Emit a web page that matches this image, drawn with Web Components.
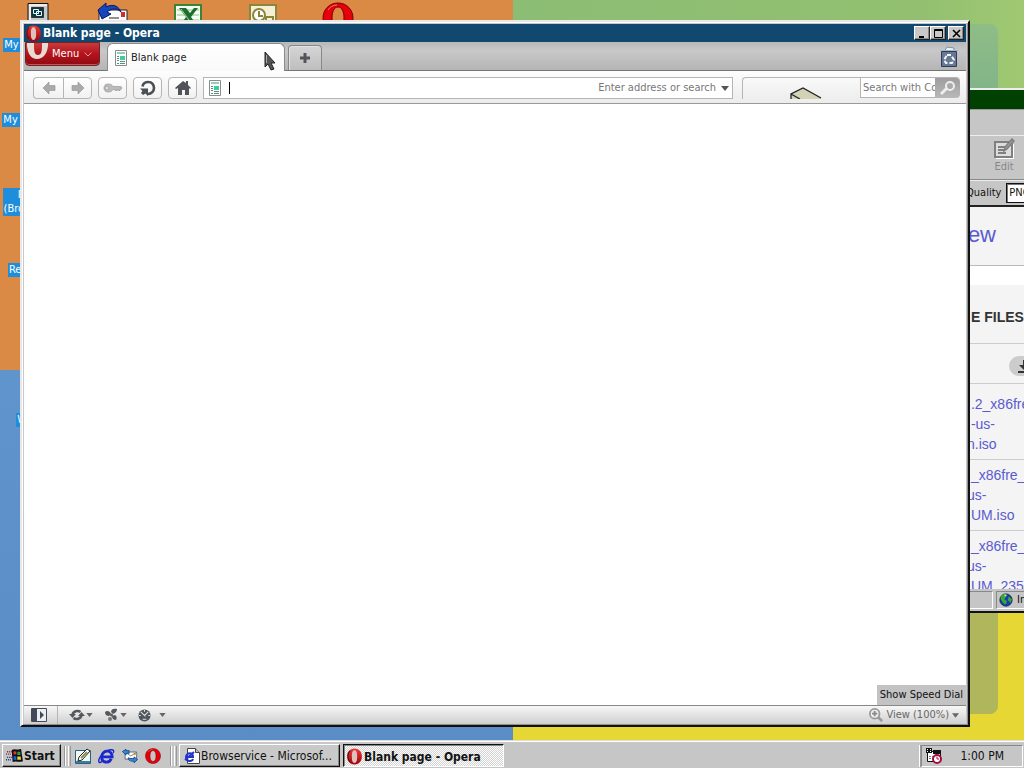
<!DOCTYPE html>
<html lang="en">
<head>
<meta charset="utf-8">
<title>Blank page - Opera</title>
<style>
html, body {
  height: 100%;
  margin: 0;
  overflow: hidden;
}
body {
  font: 11px/14px "DejaVu Sans Condensed", "DejaVu Sans", sans-serif;
  color: #111;
}
</style>
</head>
<body>
<desk-top></desk-top>
<script>
const reset = `
*, ::before, ::after { box-sizing: border-box; }
button, input, select { font: inherit; color: inherit; margin: 0; padding: 0; border: 0; border-radius: 0; background: none; outline: 0; }
a { color: inherit; text-decoration: none; }
`;

function component(name, html, ready) {
  customElements.define(name, class extends HTMLElement {
    constructor() {
      super();
      this.attachShadow({ mode: 'open' });
    }
    connectedCallback() {
      this.shadowRoot.innerHTML = `<style>${reset}</style>${html}`;
      if (ready) {
        ready.call(this, this.shadowRoot);
      }
    }
  });
}

const operaO = `<defs><linearGradient id="o" x2="0" y2="1"><stop stop-color="#ee3a35"/><stop offset="1" stop-color="#a00008"/></linearGradient></defs>
<path fill="url(#o)" fill-rule="evenodd" d="M16 1C7 1 2 8 2 16s5 15 14 15 14-7 14-15S25 1 16 1zm0 3c4 0 5 5 5 12s-1 12-5 12-5-5-5-12 1-12 5-12z"/>`;

const icons = {
  opera: ['0 0 32 32', `<ellipse cx="16" cy="16" rx="6" ry="13" fill="#dfc0bb"/>${operaO}<path d="M8 5c-5 4-6 15-1 21" fill="none" stroke="#4d1720" stroke-width="2"/>`],
  operaRed: ['0 0 32 32', `<path fill="#e6000b" stroke="#7c0000" fill-rule="evenodd" d="M16 1C7 1 1 8 1 16s6 15 15 15 15-7 15-15S25 1 16 1zm0 4c4 0 6 5 6 11s-2 11-6 11-6-5-6-11 2-11 6-11z"/><path d="M6 8c2-3 5-5 9-5" fill="none" stroke="#ff7770" stroke-width="1"/>`],
  operaWhite: ['0 0 21 20', `<path fill="#e8dbd2" fill-rule="evenodd" d="M0-8H21V3c-1 8-5 13-11 13S1 11 0 3zM7-6V3c0 6 1 9 4 9s4-3 4-9v-9z"/>`],
  computer: ['0 0 32 32', `<path fill="#c9c9c9" stroke="#111" d="M6 1.500h20v18H6z"/><path fill="#eee" d="M7 2h18v2H9v15H7z"/><path fill="#073943" stroke="#333" d="M9.500 5.500h12v10h-12z"/><path fill="none" stroke="#e9faff" d="M11.500 7.500h5v4h-5zM14.500 9.500h5v4h-5z"/><path fill="#ccc" stroke="#111" d="M2 21.500h28v8H2z"/>`],
  mail: ['0 0 32 32', `<path fill="#fff" stroke="#222" d="M2 8h28v20H2z"/><path fill="#d32c2c" d="M24 10h4v5h-4z"/><path stroke="#222" d="M12 16h10M12 20h8"/><path fill="#1746ba" stroke="#04166d" d="M1 8l8-7v4c8-4 13 0 15 5-4-4-9-4-14 0l4 2-9 5z"/>`],
  excel: ['0 0 32 32', `<path fill="#f5fff2" stroke="#3a8337" stroke-width="2" d="M3 3h26v26H3z"/><path stroke="#8fbd83" d="M5 8h22M5 13h22M5 18h22"/><path fill="#1c6e2e" d="M7 6h7l4 5 4-5h4l-7 9 8 11h-7l-5-7-5 7H6l8-11z"/><path stroke="#aed3a3" d="M9 7l13 18"/>`],
  outlook: ['0 0 32 32', `<path fill="#f3f0d5" stroke="#8b853d" stroke-width="2" d="M3 3h26v26H3z"/><circle cx="12" cy="13" r="6" fill="#fff" stroke="#8c8538" stroke-width="2"/><path d="M12 9v5h4M19 15h7v8h-3v-4h-4z" fill="none" stroke="#8c8538" stroke-width="2"/>`],
  page: ['0 0 12 16', `<path fill="#fff" stroke="#858d8b" d="M.5.5h11v15H.5z"/><path fill="#92ceb8" d="M2 2h8v2H2z"/><path fill="#45c99e" d="M5 6h5v4H5z"/><path stroke="#568d7c" d="M2 6.500h2M2 8.500h2M2 10.500h2M2 13.500h2M5 11.500h5M5 13.500h5"/>`],
  back: ['0 0 16 14', `<path fill="#aaa" stroke="#999" stroke-width=".7" d="M8 1v3.500h6v5H8V13L2 7z"/>`],
  forward: ['0 0 16 14', `<path fill="#aaa" stroke="#999" stroke-width=".7" d="M8 1v3.500H2v5h6V13l6-6z"/>`],
  key: ['0 0 20 12', `<path fill="#bbb" stroke="#999" stroke-width=".7" fill-rule="evenodd" d="M5 2c3 0 4 1 5 2.500h8L19 6l-1 1.500h-1v1h-2v-1h-1v1h-2v-1h-2C9 9 8 10 5 10S1 8 1 6s1-4 4-4zM4 4.500a1.500 1.500 0 100 3 1.500 1.500 0 000-3z"/>`],
  reload: ['0 0 16 16', `<path fill="none" stroke="#4b5055" stroke-width="2.600" d="M2.500 6.500C3 3 6 2 8.500 2 12 2 14 5 14 8s-2.500 6-6 6H7"/><path fill="#4b5055" d="M0 8.500h8V16l-2.500-2.500L3 15l-2-2 1.500-2z"/>`],
  home: ['0 0 16 16', `<path fill="#505459" d="M8 1L0 8l1 1 2-1v7h4v-5h3v5h4V8l1 1 1-1-3-3V1h-2v2z"/>`],
  plus: ['0 0 12 12', `<path fill="#52565c" d="M4.500 1h3v3.500H11v3H7.500V11h-3V7.500H1v-3h3.500z"/>`],
  trash: ['0 0 18 22', `<path fill="#e6f0f7" stroke="#7b91a5" d="M4 6l3-5 7 1v5z"/><path fill="#687792" stroke="#2d3b58" d="M1.500 5.500h15v15h-15z"/><path stroke="#a7b7cb" d="M0 4.500h18"/><path fill="none" stroke="#eef6ff" stroke-width="2" stroke-dasharray="4 2" d="M7 9h4l3 5-2 3H6l-2-3z"/>`],
  magnifier: ['0 0 16 16', `<path stroke="#eee" stroke-width="3" d="M1 14l6-6"/><circle cx="10" cy="6" r="4" fill="#aaa" stroke="#eee" stroke-width="2"/>`],
  zoom: ['0 0 16 16', `<path stroke="#999" stroke-width="3" d="M10 10l5 5"/><circle cx="6.500" cy="6.500" r="5.500" fill="#eee" stroke="#999" stroke-width="2"/><path stroke="#888" stroke-width="2" d="M3.500 6.500h6M6.500 3.500v6"/>`],
  down: ['0 0 8 5', `<path fill="currentColor" d="M0 0h8L4 5z"/>`],
  chevron: ['0 0 8 5', `<path fill="none" stroke="#e7a0a0" d="M.5.5L4 4 7.500.5"/>`],
  panel: ['0 0 16 14', `<path fill="#eceff2" stroke="#424a57" d="M.5.5h15v13H.5z"/><path fill="#424a57" d="M1 1h5v12H1zM9 3l4 4-4 4z"/>`],
  sync: ['0 0 16 12', `<path fill="none" stroke="#54585d" stroke-width="2.500" d="M3.500 6C4 2 9 1 11.500 3M12.500 6c-.5 4-5.500 5-8 3"/><path fill="#54585d" d="M0 5h7l-3.500 4zM9 7h7l-3.500-4z"/>`],
  unite: ['0 0 15 14', `<path fill="#54585d" d="M1 4c2-2 5-1 6 2L5 8C3 8 1 7 1 4zM7 4c0-3 3-4 6-3 0 3-2 4-4 5zM8 8l3-1c2 1 2 3 1 5-3 0-4-2-4-4z"/><circle cx="6" cy="11" r="2" fill="#777"/><circle cx="7.500" cy="7" r="1.500" fill="#54585d"/>`],
  turbo: ['0 0 14 14', `<circle cx="7" cy="7" r="6.500" fill="#4f545b"/><path stroke="#dce0e3" stroke-width="1.200" d="M7 1v2M1 7h2M11 7h2M3 3l5 5M11 3l-4 4M5 11h4"/>`],
  min: ['0 0 9 9', `<path fill="#000" d="M1 7h5v2H1z"/>`],
  max: ['0 0 9 9', `<path fill="none" stroke="#000" d="M.5.5h8v8h-8zM0 1.500h9"/>`],
  close: ['0 0 9 9', `<path stroke="#000" stroke-width="1.600" d="M1 1l7 7M8 1L1 8"/>`],
  windows: ['0 0 18 16', `<path fill="#111" d="M6 2c4-2 6 1 9-1h1l2 13c-5 2-7-1-11 1z"/><path fill="#e23a2f" d="M8 4c1-1 2 0 3 0v3c-1 0-2-1-3 0z"/><path fill="#28a047" d="M12 4h3l.5 3.500H12z"/><path fill="#215ed3" d="M8 9c1-1 2 0 3 0v4c-1 0-2-1-3 0z"/><path fill="#efd32b" d="M12 9h3.500l.5 3.500h-4z"/><path stroke="#8d1d28" stroke-width="1.500" stroke-dasharray="1 1" d="M1 4h5M0 6.500h6"/><path stroke="#1a2c8c" stroke-width="1.500" stroke-dasharray="1 1" d="M1 10h5M0 12.500h6"/>`],
  desktop: ['0 0 16 16', `<path fill="#f1f9ee" stroke="#27618a" d="M.5 2.500h15v13H.5z"/><path fill="#3c7e9f" d="M1 13h14v2H1z"/><path fill="#fff" stroke="#222" d="M4 9l8-8 3 2-8 9-4 1z"/><path stroke="#8a8f55" stroke-width="2" d="M6 10l6-6"/>`],
  ie: ['0 0 18 16', `<path fill="none" stroke="#1a28d0" stroke-width="3" d="M4 9h11c0-8-10-8-11-1-1 8 8 8 10 3"/><path fill="none" stroke="#1a28d0" stroke-width="1.500" d="M4 14C0 17-1 12 5 6s14-6 11-1"/>`],
  iePage: ['0 0 16 16', `<path fill="#fff" stroke="#444" d="M3.500.5h8l4 4v11h-12z"/><path fill="#bbb" stroke="#444" d="M11.500.5v4h4"/><path fill="none" stroke="#2034c8" stroke-width="2" d="M2 9h7c0-5-6-5-7 0 0 5 6 5 7 2M1 12l9-8"/>`],
  outlookEx: ['0 0 18 16', `<path fill="#fff" stroke="#41618f" d="M3.500 3.500h13v8h-13z"/><path fill="#e9b52e" d="M13 4h3v3h-3z"/><path fill="none" stroke="#777" d="M4 4l6 4 6-4"/><path fill="#2f8fd6" stroke="#15438b" d="M.5 3l4-2.500V2H8v3H4.500v2zM17.500 12l-4 3.500V14C9 14 7 13 7 10c2 1 4 1 6.500 1V9z"/>`],
  scheduler: ['0 0 16 16', `<path fill="#fff" stroke="#111" d="M1.500 3.500h13v10h-13z"/><path fill="#111" d="M7 2h8v4H7zM0 0h6v5H0z"/><path stroke="#fff" stroke-width="1" d="M1 1.500h1M4 1.500h1M1 3.500h1M4 3.500h1"/><path stroke="#777" stroke-dasharray="2 1" d="M3 8.500h7M3 10.500h4"/><circle cx="11" cy="11" r="4" fill="#fff" stroke="#a30d3d" stroke-width="2"/><path fill="none" stroke="#a30d3d" d="M11 8.500V11h2"/>`],
  globe: ['0 0 16 16', `<circle cx="8" cy="8" r="7" fill="#153bb7" stroke="#10214c"/><path fill="#38a832" d="M2 4c3-4 7-3 7-1L6 7l3 2-1 4C3 12 4 8 2 8zM11 4l4 3-2 4-3-3z"/><path fill="#e7f6e7" d="M6 2h3L7 4z"/>`],
  edit: ['0 0 22 22', `<path fill="none" stroke="#fff" d="M3 20.500h17.500V6"/><path fill="#ddd" stroke="#808080" stroke-width="2" d="M2 4h17v15H2z"/><path stroke="#808080" stroke-width="2" d="M5 9h7M5 12h6M5 15h8"/><path fill="#999" stroke="#808080" stroke-width="1.500" d="M11 13l1-4 7-8 2 2-7 8z"/>`],
  download: ['0 0 16 16', `<path fill="#333" d="M6 2h4v5h4l-6 6-6-6h4zM1 13h14v2H1z"/>`],
  book: ['0 0 32 12', `<path fill="#d3d2b7" d="M1 12V7l12-6 18 10v1z"/><path fill="none" stroke="#222" stroke-width="1.300" d="M1 12V7l12-6 18 10M1 7l9 5"/>`],
  cursor: ['0 0 12 20', `<path fill="#555" stroke="#222" d="M1 1v15l3-3 3 6 3-1-3-6h4z"/><path stroke="#aaa" d="M2.500 4v8"/>`]
};

customElements.define('app-icon', class extends HTMLElement {
  constructor() {
    super();
    this.attachShadow({ mode: 'open' });
  }
  connectedCallback() {
    const [box, body] = icons[this.getAttribute('name')];
    const [, , w, h] = box.split(' ');
    const width = this.getAttribute('w') || w;
    const height = this.getAttribute('h') || h;
    this.shadowRoot.innerHTML = `<style>:host { display: block; flex: none; } svg { display: block; }</style>
      <svg width="${width}" height="${height}" viewBox="${box}" aria-hidden="true">${body}</svg>`;
  }
});

component('desk-icon', `
<style>
:host { display: flex; flex-direction: column; align-items: center; height: 75px; padding-top: 2px; gap: 4px; color: #fff; }
.pic { height: 32px; flex: none; }
span { background: #1e8ddb; padding: 0 1px; text-align: center; white-space: nowrap; }
</style>
<div class="pic"></div>
<span><slot></slot></span>
`, function(root) {
  const name = this.getAttribute('icon');
  if (name) {
    root.querySelector('.pic').innerHTML = `<app-icon name="${name}"></app-icon>`;
  }
  if (!this.textContent) {
    root.querySelector('span').remove();
  }
});

component('title-bar', `
<style>
:host { display: flex; align-items: center; height: 18px; padding: 0 2px 0 1px; background: #11486f; color: #fff; font: bold 12px/18px "DejaVu Sans Condensed", sans-serif; }
span { flex: 1; padding-left: 1px; }
.group { display: flex; }
.group + button { margin-left: 2px; }
button { display: flex; justify-content: center; align-items: center; width: 16px; height: 14px; background: #c9c9c9; border: 1px solid; border-color: #fff #222 #222 #fff; box-shadow: inset -1px -1px #888; }
</style>
<app-icon name="opera" w="17" h="17"></app-icon>
<span><slot></slot></span>
<div class="group">
  <button aria-label="Minimize"><app-icon name="min"></app-icon></button>
  <button aria-label="Maximize"><app-icon name="max"></app-icon></button>
</div>
<button aria-label="Close"><app-icon name="close"></app-icon></button>
`);

component('tab-bar', `
<style>
:host { display: flex; height: 29px; padding: 0 8px 0 1px; background: linear-gradient(#b8b8b8, #c8c8c8 30%, #b5b5b5); border-bottom: 1px solid #747474; color: #222; }
.menu { display: flex; align-items: center; width: 75px; height: 24px; padding: 0 7px 0 1px; gap: 4px; color: #fff; background: linear-gradient(#c83a3e, #b5121b 50%, #8f0b12); border: 1px solid #6c2428; border-radius: 0 0 4px 4px; box-shadow: inset 0 -1px #d25054; }
.menu app-icon:first-child { align-self: flex-start; }
.menu span { flex: 1; text-align: left; }
.tab { display: flex; align-items: center; gap: 4px; width: 178px; height: 28px; margin: 1px 0 0 7px; padding: 0 7px; background: linear-gradient(#fff, #fafafa); border: 1px solid #8b8b8b; border-bottom: 0; border-radius: 6px 6px 0 0; }
.new { display: flex; align-items: center; justify-content: center; width: 34px; height: 25px; margin: 3px 0 0 3px; border: 1px solid #888; border-bottom: 0; border-radius: 4px 4px 0 0; background: linear-gradient(#d5d5d5, #bebebe); box-shadow: inset 1px 1px #e2e2e2; }
.trash { margin: 4px 0 0 auto; height: 22px; }
</style>
<button class="menu"><app-icon name="operaWhite"></app-icon><span>Menu</span><app-icon name="chevron"></app-icon></button>
<button class="tab"><app-icon name="page"></app-icon>Blank page</button>
<button class="new" aria-label="New tab"><app-icon name="plus"></app-icon></button>
<button class="trash" aria-label="Closed tabs"><app-icon name="trash"></app-icon></button>
`);

component('tool-button', `
<style>
:host { display: flex; flex: none; width: 29px; }
:host([side=left]) { width: 30px; }
button { display: flex; flex: 1; align-items: center; justify-content: center; border: 1px solid #b5b5b5; border-radius: 4px; background: linear-gradient(#fff, #f1f1f1); }
:host([side=left]) button { border-radius: 4px 0 0 4px; border-right: 0; }
:host([side=right]) button { border-radius: 0 4px 4px 0; }
</style>
<button></button>
`, function(root) {
  const button = root.querySelector('button');
  button.setAttribute('aria-label', this.getAttribute('label'));
  button.innerHTML = `<app-icon name="${this.getAttribute('icon')}"></app-icon>`;
});

component('nav-bar', `
<style>
:host { display: flex; height: 33px; padding: 6px 6px 4px 9px; gap: 6px; background: linear-gradient(#fdfdfd, #ececec); border-bottom: 1px solid #999; }
.pair { display: flex; }
.address { flex: 1; display: flex; align-items: center; height: 22px; padding: 0 3px 0 5px; background: #fff; border: 1px solid #b5b5b5; color: #777; }
.address input { flex: 1; min-width: 0; text-align: right; padding-right: 5px; }
.caret { width: 1px; height: 12px; margin-left: 8px; background: #000; }
.address app-icon { color: #555; }
::placeholder { color: #777; opacity: 1; }
.personal { display: flex; width: 218px; height: 22px; margin-left: 3px; border: 1px solid #b5b5b5; border-width: 1px 0 0 1px; border-radius: 4px 4px 0 0; }
.slot { flex: 1; display: flex; align-items: flex-end; justify-content: center; padding-left: 8px; }
.search { width: 75px; height: 20px; padding-left: 2px; background: #fff; border: 1px solid #b5b5b5; border-width: 0 0 1px 1px; color: #777; }
.go { display: flex; align-items: center; justify-content: center; width: 25px; height: 20px; border-radius: 0 4px 4px 0; background: linear-gradient(#9d9d9d, #b9b9b9); }
</style>
<div class="pair">
  <tool-button side="left" icon="back" label="Back"></tool-button>
  <tool-button side="right" icon="forward" label="Forward"></tool-button>
</div>
<tool-button icon="key" label="Wand"></tool-button>
<tool-button icon="reload" label="Reload"></tool-button>
<tool-button icon="home" label="Home"></tool-button>
<div class="address">
  <app-icon name="page"></app-icon>
  <span class="caret"></span>
  <input aria-label="Address" placeholder="Enter address or search">
  <app-icon name="down"></app-icon>
</div>
<div class="personal">
  <div class="slot"><app-icon name="book"></app-icon></div>
  <input class="search" aria-label="Search" placeholder="Search with Complete">
  <button class="go" aria-label="Go"><app-icon name="magnifier"></app-icon></button>
</div>
`);

component('status-bar', `
<style>
:host { display: flex; align-items: center; height: 19px; padding: 0 7px; background: linear-gradient(#f7f7f7, #cfcfcf); border-top: 1px solid #888; color: #666; }
button { display: flex; align-items: center; gap: 1px; }
.extras { display: flex; align-items: center; gap: 11px; height: 18px; margin-left: 10px; padding-left: 11px; border-left: 1px solid #b5b5b5; }
.extras button:last-child { gap: 8px; }
.view { margin-left: auto; gap: 3px; }
</style>
<button aria-label="Panels"><app-icon name="panel"></app-icon></button>
<div class="extras">
  <button aria-label="Synchronize"><app-icon name="sync"></app-icon><app-icon name="down" w="7" h="4"></app-icon></button>
  <button aria-label="Unite"><app-icon name="unite"></app-icon><app-icon name="down" w="7" h="4"></app-icon></button>
  <button aria-label="Turbo"><app-icon name="turbo" w="13" h="13"></app-icon><app-icon name="down" w="7" h="4"></app-icon></button>
</div>
<button class="view"><app-icon name="zoom" w="14" h="14"></app-icon>View (100%)<app-icon name="down" w="7" h="5"></app-icon></button>
`);

component('opera-window', `
<style>
:host { display: flex; flex-direction: column; padding: 1px 1px 0; background: #c8c8c8; border: 2px solid; border-color: #e8e8e8 #111 #111 #e8e8e8; box-shadow: inset 1px 1px #fff, inset -1px -1px #909090; }
.frame { flex: 1; display: flex; flex-direction: column; padding: 1px; }
main { flex: 1; display: flex; align-items: flex-end; justify-content: flex-end; background: #fff; }
main button { height: 20px; padding: 0 3px; background: #c3c3c3; }
</style>
<div class="frame">
  <title-bar>Blank page - Opera</title-bar>
  <tab-bar></tab-bar>
  <nav-bar></nav-bar>
  <main><button>Show Speed Dial</button></main>
  <status-bar></status-bar>
</div>
`);

component('file-row', `
<style>
:host { display: block; padding: 5px 0 5px 5px; border-top: 1px solid #ccc; font: 14px/20px "Liberation Sans", sans-serif; color: #5a5bd0; white-space: nowrap; }
:host(.first) { padding-top: 10px; }
a { display: block; }
</style>
<a href="#"><slot></slot></a>
`);

component('browservice-window', `
<style>
:host { display: flex; flex-direction: column; overflow: hidden; background: #c6c6c6; border: 2px solid; border-color: #eee #222 #111 #eee; }
.title { height: 20px; flex: none; background: #004000; border-bottom: 1px solid #eee; }
.menus { height: 26px; flex: none; border-bottom: 1px solid #eee; box-shadow: 0 -1px #999; }
.tools { display: flex; height: 44px; flex: none; padding: 2px 0 0 17px; color: #888; border-bottom: 1px solid #888; text-shadow: 1px 1px #fff; }
.tools button { display: flex; flex-direction: column; align-items: center; width: 50px; }
.quality { display: flex; align-items: center; height: 27px; flex: none; gap: 5px; padding-left: 4px; border-top: 1px solid #eee; border-bottom: 2px solid #222; }
select { appearance: none; height: 20px; width: 60px; padding: 0 2px; background: #fff; border: 1px solid #111; box-shadow: inset 1px 1px #777; }
.page { flex: 1; min-height: 0; overflow: hidden; background: #f4f4f4; font-family: "Liberation Sans", sans-serif; }
.view { display: block; height: 59px; padding: 15px 0 0 1px; font-size: 22px; line-height: 26px; color: #5a5bd0; border-bottom: 1px solid #bbb; }
.gap { height: 19px; background: #fff; }
h2 { margin: 0; height: 58px; padding: 22px 0 0 9px; font-size: 14px; line-height: 20px; color: #333; white-space: nowrap; }
.download { display: flex; align-items: center; height: 40px; padding: 4px 0 0 47px; border-top: 1px solid #ccc; }
.download button { display: flex; align-items: center; width: 50px; height: 20px; padding-left: 8px; background: #ccc; border-radius: 10px; }
.foot { display: flex; height: 22px; flex: none; padding: 2px 0; gap: 3px; background: #c6c6c6; }
.foot div { display: flex; align-items: center; gap: 4px; border: 1px solid; border-color: #888 #fff #fff #888; padding-left: 2px; }
.foot div:first-child { width: 31px; }
.foot div:last-child { flex: 1; }
</style>
<div class="title"></div>
<div class="menus"></div>
<div class="tools"><button><app-icon name="edit"></app-icon>Edit</button></div>
<div class="quality"><label for="q">Quality</label><select id="q"><option>PNG</option></select></div>
<div class="page">
  <a class="view" href="#">iew</a>
  <div class="gap"></div>
  <h2>E FILES</h2>
  <div class="download"><button aria-label="Download"><app-icon name="download"></app-icon></button></div>
  <file-row class="first">&nbsp;.2_x86fre_<br>&nbsp;-us-<br>n.iso</file-row>
  <file-row>&nbsp;_x86fre_<br>us-<br>&nbsp;UM.iso</file-row>
  <file-row>&nbsp;_x86fre_<br>us-<br>&nbsp;UM_235</file-row>
</div>
<div class="foot"><div></div><div><app-icon name="globe" w="14" h="14"></app-icon>In</div></div>
`);

component('task-button', `
<style>
:host { display: flex; width: 161px; }
button { flex: 1; min-width: 0; display: flex; align-items: center; gap: 1px; height: 23px; padding: 0 4px; background: #c9c9c9; border: 1px solid; border-color: #fff #111 #111 #fff; box-shadow: inset -1px -1px #888; font-size: 12px; }
:host([active]) button { font-weight: bold; border-color: #111 #fff #fff #111; box-shadow: inset 1px 1px #888; background: repeating-conic-gradient(#fff 0 25%, #d2d2d2 0 50%) 0 0 / 2px 2px; padding: 2px 2px 0; }
span { white-space: nowrap; }
</style>
<button><slot name="icon"></slot><span><slot></slot></span></button>
`);

component('task-bar', `
<style>
:host { display: flex; align-items: center; height: 28px; padding: 2px 1px 0 2px; background: #c6c6c6; border-top: 1px solid #ddd; box-shadow: inset 0 1px #fff; }
.start { display: flex; align-items: center; gap: 1px; height: 23px; width: 59px; padding: 0 3px; font: bold 12px/16px "DejaVu Sans Condensed", sans-serif; border: 1px solid; border-color: #fff #111 #111 #fff; box-shadow: inset -1px -1px #888; }
.grip { display: flex; gap: 2px; margin: 0 4px 0 3px; }
.grip::before, .grip::after { content: ""; width: 2px; height: 20px; border-left: 1px solid #999; border-right: 1px solid #fff; }
.grip::after { width: 3px; border-left-color: #fff; border-right-color: #999; }
.quick { display: flex; align-items: center; gap: 7px; margin-right: 6px; }
.quick + .grip { margin-right: 2px; }
.tasks { display: flex; flex: 1; gap: 3px; }
.tray { display: flex; align-items: center; justify-content: space-between; width: 102px; height: 22px; padding: 0 18px 0 4px; border: 1px solid; border-color: #888 #fff #fff #888; font-size: 12px; }
.edge { width: 2px; height: 22px; background: #fff; border-right: 1px solid #999; }
</style>
<button class="start"><app-icon name="windows" w="17" h="15"></app-icon>Start</button>
<div class="grip"></div>
<div class="quick">
  <a href="#" aria-label="Show desktop"><app-icon name="desktop"></app-icon></a>
  <a href="#" aria-label="Internet Explorer"><app-icon name="ie" w="17"></app-icon></a>
  <a href="#" aria-label="Outlook Express"><app-icon name="outlookEx" w="16"></app-icon></a>
  <a href="#" aria-label="Opera"><app-icon name="operaRed" w="16" h="16"></app-icon></a>
</div>
<div class="grip"></div>
<div class="tasks">
  <task-button><app-icon slot="icon" name="iePage"></app-icon>Browservice - Microsof...</task-button>
  <task-button active><app-icon slot="icon" name="opera" w="17" h="17"></app-icon>Blank page - Opera</task-button>
</div>
<div class="edge"></div>
<div class="tray"><app-icon name="scheduler"></app-icon><time>1:00 PM</time></div>
`);

component('desk-top', `
<style>
:host { display: flex; flex-direction: column; height: 100%; overflow: hidden; }
.desk { position: relative; flex: 1; min-height: 0; overflow: hidden; display: grid; grid-template: 1fr 1fr / 513fr 511fr; }
.orange { background: #da8a45; }
.green { background: linear-gradient(90deg, #8cbd74, #92c070 80%, #a0c872); display: flex; padding: 24px 26px 0 0; }
.green i { flex: 1; background: linear-gradient(#8fbd86, #75ab8c 40%); border-radius: 0 8px 0 0; }
.blue { background: linear-gradient(#6094cc, #5a8cc6); }
.yellow { background: #e6d734; display: flex; padding: 0 26px 26px 0; }
.yellow i { flex: 1; background: #b0b65c; border-radius: 0 0 8px 0; }
.icons { position: absolute; top: 0; left: 0; display: flex; }
.icons > div { width: 75px; }
browservice-window { position: absolute; left: 960px; right: -60px; top: 88px; bottom: 127px; }
opera-window { position: absolute; left: 20px; right: 54px; top: 20px; bottom: 13px; }
.pointer { position: absolute; left: 264px; top: 51px; }
</style>
<div class="desk">
  <div class="orange"></div>
  <div class="green"><i></i></div>
  <div class="blue"></div>
  <div class="yellow"><i></i></div>
  <div class="icons">
    <div>
      <desk-icon icon="computer">My Computer</desk-icon>
      <desk-icon>My Network...</desk-icon>
      <desk-icon>Internet<br>(Browservice)</desk-icon>
      <desk-icon>Recycle Bin</desk-icon>
      <desk-icon></desk-icon>
      <desk-icon>Winamp</desk-icon>
    </div>
    <div><desk-icon icon="mail"></desk-icon></div>
    <div><desk-icon icon="excel"></desk-icon></div>
    <div><desk-icon icon="outlook"></desk-icon></div>
    <div><desk-icon icon="operaRed"></desk-icon></div>
  </div>
  <browservice-window></browservice-window>
  <opera-window></opera-window>
  <app-icon class="pointer" name="cursor"></app-icon>
</div>
<task-bar></task-bar>
`);
</script>
</body>
</html>
